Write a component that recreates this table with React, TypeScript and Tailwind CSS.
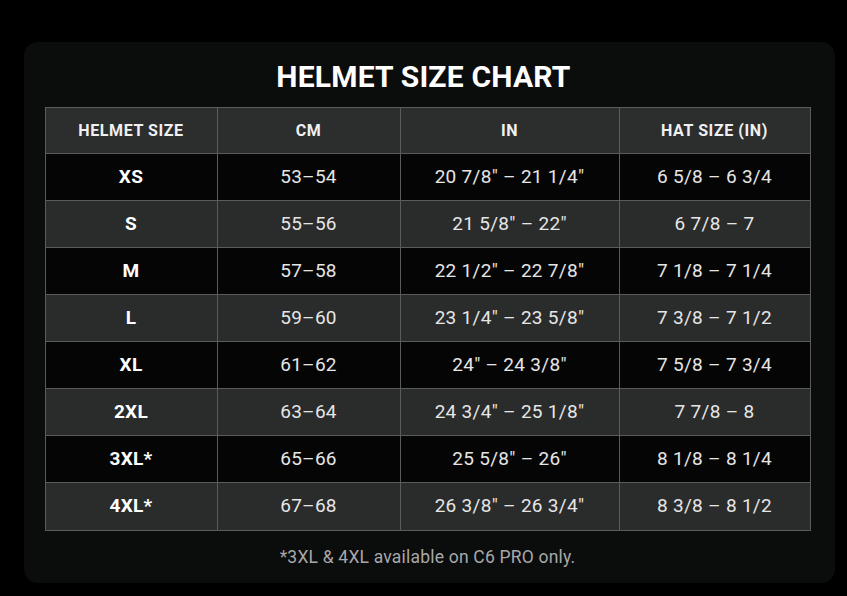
import React from "react";

const rows = [
  ["XS", "53–54", "20 7/8\" – 21 1/4\"", "6 5/8 – 6 3/4"],
  ["S", "55–56", "21 5/8\" – 22\"", "6 7/8 – 7"],
  ["M", "57–58", "22 1/2\" – 22 7/8\"", "7 1/8 – 7 1/4"],
  ["L", "59–60", "23 1/4\" – 23 5/8\"", "7 3/8 – 7 1/2"],
  ["XL", "61–62", "24\" – 24 3/8\"", "7 5/8 – 7 3/4"],
  ["2XL", "63–64", "24 3/4\" – 25 1/8\"", "7 7/8 – 8"],
  ["3XL*", "65–66", "25 5/8\" – 26\"", "8 1/8 – 8 1/4"],
  ["4XL*", "67–68", "26 3/8\" – 26 3/4\"", "8 3/8 – 8 1/2"],
];

const cols = ["w-[172px]", "w-[183px]", "w-[219px]", "w-[190px]"];

export default function App() {
  return (
    <div className="w-[847px] h-[596px] bg-black pt-[42px] px-[24px] font-['Roboto',sans-serif]">
      <div className="w-[811px] h-[541px] rounded-[14px] bg-[#0b0c0c] flex flex-col pt-[16px] pl-[20px]">
        <div className="w-[767px] flex flex-col items-center">
          <h1 className="text-[30px] leading-[38px] font-bold text-white tracking-[0.2px] h-[49px] pr-[8px]">
            HELMET SIZE CHART
          </h1>
          <div className="border border-[#5a5b5b] flex flex-col">
            <div className="flex bg-[#2c2d2d] h-[46px] border-b border-[#5a5b5b]">
              {["HELMET SIZE", "CM", "IN", "HAT SIZE (IN)"].map((h, i) => (
                <div
                  key={h}
                  className={`${cols[i]} flex items-center justify-center text-[16px] font-bold tracking-[0.6px] text-[#f0f0f0] ${i < 3 ? "border-r border-[#5a5b5b]" : ""}`}
                >
                  {h}
                </div>
              ))}
            </div>
            {rows.map((r, ri) => (
              <div
                key={r[0]}
                className={`flex h-[47px] ${ri % 2 === 0 ? "bg-[#050505]" : "bg-[#2a2b2b]"} ${ri < rows.length - 1 ? "border-b border-[#5a5b5b]" : ""}`}
              >
                {r.map((c, i) => (
                  <div
                    key={i}
                    className={`${cols[i]} flex items-center justify-center text-[19px] tracking-[0.3px] ${i === 0 ? "font-bold text-white" : "text-[#e6e6e6]"} ${i < 3 ? "border-r border-[#5a5b5b]" : ""}`}
                  >
                    {c}
                  </div>
                ))}
              </div>
            ))}
          </div>
          <div className="mt-[13px] text-[17.5px] tracking-[0.2px] text-[#a8a8a8]">
            *3XL &amp; 4XL available on C6 PRO only.
          </div>
        </div>
      </div>
    </div>
  );
}
